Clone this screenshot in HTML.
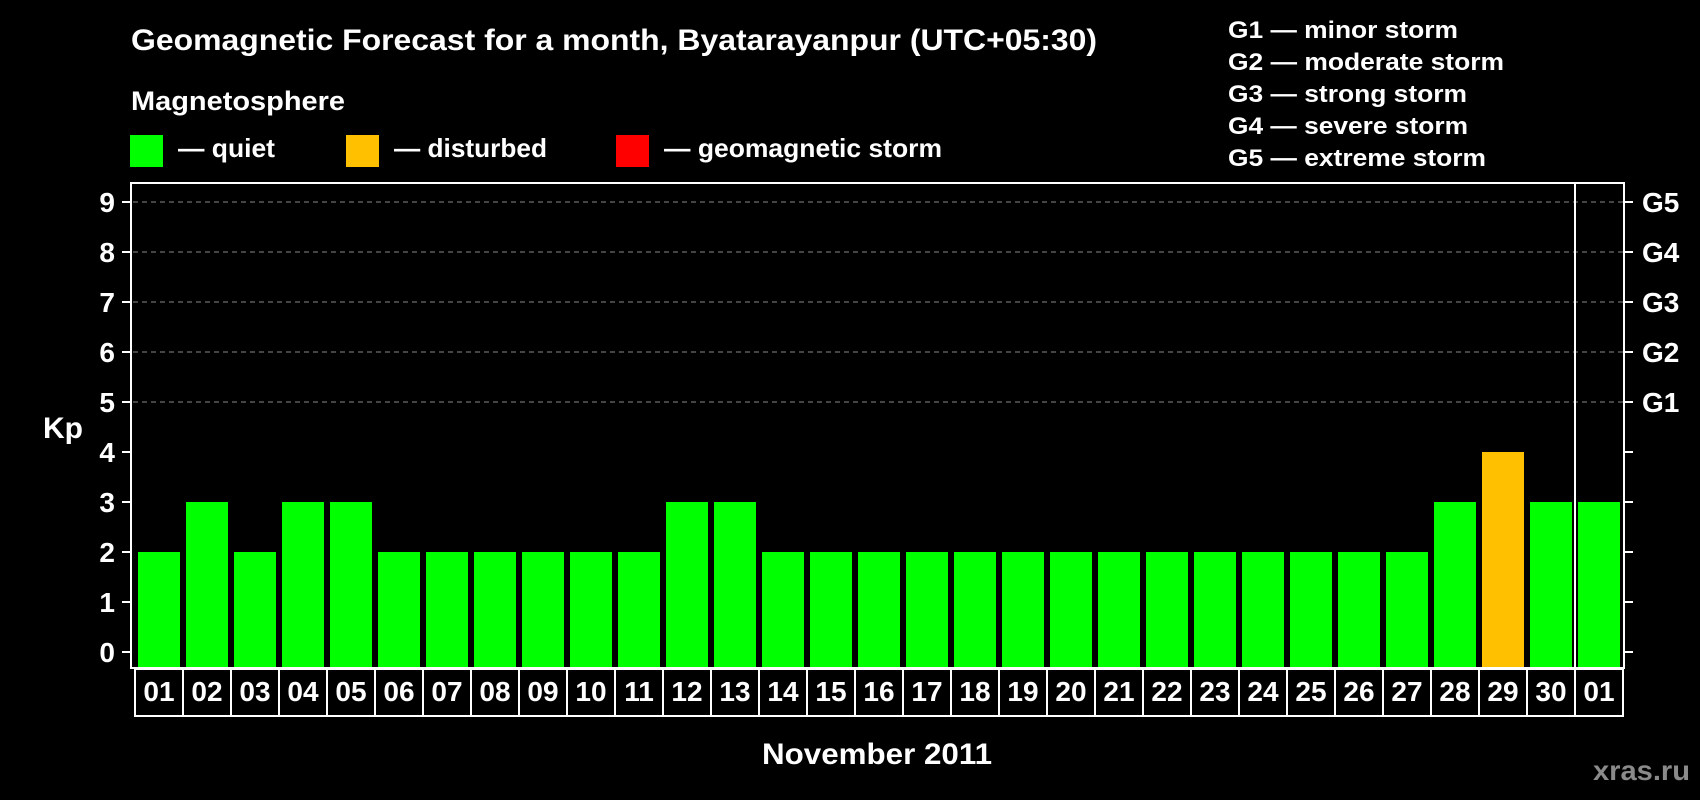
<!DOCTYPE html>
<html><head><meta charset="utf-8"><style>
html,body{margin:0;padding:0;background:#000;}
svg{display:block;}
text{font-family:"Liberation Sans",Arial,sans-serif;font-weight:bold;fill:#fff;}
</style></head><body>
<svg width="1700" height="800" viewBox="0 0 1700 800" xmlns="http://www.w3.org/2000/svg">
<rect width="1700" height="800" fill="#000"/>
<text x="131" y="50" font-size="30" textLength="966" lengthAdjust="spacingAndGlyphs">Geomagnetic Forecast for a month, Byatarayanpur (UTC+05:30)</text>
<text x="131" y="110" font-size="27" textLength="214" lengthAdjust="spacingAndGlyphs">Magnetosphere</text>
<rect x="130" y="135" width="33" height="32" fill="#00ff00"/>
<text x="178" y="157" font-size="26" textLength="97" lengthAdjust="spacingAndGlyphs">— quiet</text>
<rect x="346" y="135" width="33" height="32" fill="#ffc000"/>
<text x="394" y="157" font-size="26" textLength="153" lengthAdjust="spacingAndGlyphs">— disturbed</text>
<rect x="616" y="135" width="33" height="32" fill="#ff0000"/>
<text x="664" y="157" font-size="26" textLength="278" lengthAdjust="spacingAndGlyphs">— geomagnetic storm</text>
<g font-size="24">
<text x="1228" y="38" textLength="230" lengthAdjust="spacingAndGlyphs">G1 — minor storm</text>
<text x="1228" y="70" textLength="276" lengthAdjust="spacingAndGlyphs">G2 — moderate storm</text>
<text x="1228" y="102" textLength="239" lengthAdjust="spacingAndGlyphs">G3 — strong storm</text>
<text x="1228" y="134" textLength="240" lengthAdjust="spacingAndGlyphs">G4 — severe storm</text>
<text x="1228" y="166" textLength="258" lengthAdjust="spacingAndGlyphs">G5 — extreme storm</text>
</g>
<g stroke="#888" stroke-width="1" stroke-dasharray="5,4">
<line x1="133" y1="202" x2="1623" y2="202"/>
<line x1="133" y1="252" x2="1623" y2="252"/>
<line x1="133" y1="302" x2="1623" y2="302"/>
<line x1="133" y1="352" x2="1623" y2="352"/>
<line x1="133" y1="402" x2="1623" y2="402"/>
</g>
<g fill="#00ff00">
<rect x="138" y="552" width="42" height="116"/>
<rect x="186" y="502" width="42" height="166"/>
<rect x="234" y="552" width="42" height="116"/>
<rect x="282" y="502" width="42" height="166"/>
<rect x="330" y="502" width="42" height="166"/>
<rect x="378" y="552" width="42" height="116"/>
<rect x="426" y="552" width="42" height="116"/>
<rect x="474" y="552" width="42" height="116"/>
<rect x="522" y="552" width="42" height="116"/>
<rect x="570" y="552" width="42" height="116"/>
<rect x="618" y="552" width="42" height="116"/>
<rect x="666" y="502" width="42" height="166"/>
<rect x="714" y="502" width="42" height="166"/>
<rect x="762" y="552" width="42" height="116"/>
<rect x="810" y="552" width="42" height="116"/>
<rect x="858" y="552" width="42" height="116"/>
<rect x="906" y="552" width="42" height="116"/>
<rect x="954" y="552" width="42" height="116"/>
<rect x="1002" y="552" width="42" height="116"/>
<rect x="1050" y="552" width="42" height="116"/>
<rect x="1098" y="552" width="42" height="116"/>
<rect x="1146" y="552" width="42" height="116"/>
<rect x="1194" y="552" width="42" height="116"/>
<rect x="1242" y="552" width="42" height="116"/>
<rect x="1290" y="552" width="42" height="116"/>
<rect x="1338" y="552" width="42" height="116"/>
<rect x="1386" y="552" width="42" height="116"/>
<rect x="1434" y="502" width="42" height="166"/>
<rect x="1530" y="502" width="42" height="166"/>
<rect x="1578" y="502" width="42" height="166"/>
</g>
<rect x="1482" y="452" width="42" height="216" fill="#ffc000"/>
<g stroke="#fff" stroke-width="2" fill="none">
<rect x="131" y="183" width="1493" height="485"/>
<line x1="1575" y1="183" x2="1575" y2="668"/>
<rect x="135" y="669" width="1488" height="47"/>
</g>
<g stroke="#fff" stroke-width="2">
<line x1="122" y1="202" x2="131" y2="202"/><line x1="122" y1="252" x2="131" y2="252"/>
<line x1="122" y1="302" x2="131" y2="302"/><line x1="122" y1="352" x2="131" y2="352"/>
<line x1="122" y1="402" x2="131" y2="402"/><line x1="122" y1="452" x2="131" y2="452"/>
<line x1="122" y1="502" x2="131" y2="502"/><line x1="122" y1="552" x2="131" y2="552"/>
<line x1="122" y1="602" x2="131" y2="602"/><line x1="122" y1="652" x2="131" y2="652"/>
<line x1="1624" y1="202" x2="1633" y2="202"/><line x1="1624" y1="252" x2="1633" y2="252"/>
<line x1="1624" y1="302" x2="1633" y2="302"/><line x1="1624" y1="352" x2="1633" y2="352"/>
<line x1="1624" y1="402" x2="1633" y2="402"/><line x1="1624" y1="452" x2="1633" y2="452"/>
<line x1="1624" y1="502" x2="1633" y2="502"/><line x1="1624" y1="552" x2="1633" y2="552"/>
<line x1="1624" y1="602" x2="1633" y2="602"/><line x1="1624" y1="652" x2="1633" y2="652"/>
</g>
<g stroke="#fff" stroke-width="2">
<line x1="183" y1="669" x2="183" y2="716"/><line x1="231" y1="669" x2="231" y2="716"/>
<line x1="279" y1="669" x2="279" y2="716"/><line x1="327" y1="669" x2="327" y2="716"/>
<line x1="375" y1="669" x2="375" y2="716"/><line x1="423" y1="669" x2="423" y2="716"/>
<line x1="471" y1="669" x2="471" y2="716"/><line x1="519" y1="669" x2="519" y2="716"/>
<line x1="567" y1="669" x2="567" y2="716"/><line x1="615" y1="669" x2="615" y2="716"/>
<line x1="663" y1="669" x2="663" y2="716"/><line x1="711" y1="669" x2="711" y2="716"/>
<line x1="759" y1="669" x2="759" y2="716"/><line x1="807" y1="669" x2="807" y2="716"/>
<line x1="855" y1="669" x2="855" y2="716"/><line x1="903" y1="669" x2="903" y2="716"/>
<line x1="951" y1="669" x2="951" y2="716"/><line x1="999" y1="669" x2="999" y2="716"/>
<line x1="1047" y1="669" x2="1047" y2="716"/><line x1="1095" y1="669" x2="1095" y2="716"/>
<line x1="1143" y1="669" x2="1143" y2="716"/><line x1="1191" y1="669" x2="1191" y2="716"/>
<line x1="1239" y1="669" x2="1239" y2="716"/><line x1="1287" y1="669" x2="1287" y2="716"/>
<line x1="1335" y1="669" x2="1335" y2="716"/><line x1="1383" y1="669" x2="1383" y2="716"/>
<line x1="1431" y1="669" x2="1431" y2="716"/><line x1="1479" y1="669" x2="1479" y2="716"/>
<line x1="1527" y1="669" x2="1527" y2="716"/><line x1="1575" y1="669" x2="1575" y2="716"/>
</g>
<g font-size="28" text-anchor="end">
<text x="115" y="212">9</text><text x="115" y="262">8</text><text x="115" y="312">7</text>
<text x="115" y="362">6</text><text x="115" y="412">5</text><text x="115" y="462">4</text>
<text x="115" y="512">3</text><text x="115" y="562">2</text><text x="115" y="612">1</text>
<text x="115" y="662">0</text>
</g>
<text x="43" y="438" font-size="30">Kp</text>
<g font-size="28">
<text x="1642" y="212">G5</text><text x="1642" y="262">G4</text><text x="1642" y="312">G3</text>
<text x="1642" y="362">G2</text><text x="1642" y="412">G1</text>
</g>
<g font-size="28" text-anchor="middle">
<text x="159" y="701">01</text><text x="207" y="701">02</text><text x="255" y="701">03</text>
<text x="303" y="701">04</text><text x="351" y="701">05</text><text x="399" y="701">06</text>
<text x="447" y="701">07</text><text x="495" y="701">08</text><text x="543" y="701">09</text>
<text x="591" y="701">10</text><text x="639" y="701">11</text><text x="687" y="701">12</text>
<text x="735" y="701">13</text><text x="783" y="701">14</text><text x="831" y="701">15</text>
<text x="879" y="701">16</text><text x="927" y="701">17</text><text x="975" y="701">18</text>
<text x="1023" y="701">19</text><text x="1071" y="701">20</text><text x="1119" y="701">21</text>
<text x="1167" y="701">22</text><text x="1215" y="701">23</text><text x="1263" y="701">24</text>
<text x="1311" y="701">25</text><text x="1359" y="701">26</text><text x="1407" y="701">27</text>
<text x="1455" y="701">28</text><text x="1503" y="701">29</text><text x="1551" y="701">30</text>
<text x="1599" y="701">01</text>
</g>
<text x="762" y="764" font-size="30" textLength="230" lengthAdjust="spacingAndGlyphs">November 2011</text>
<text x="1593" y="780" font-size="28" style="fill:#8a8a8a" textLength="97" lengthAdjust="spacingAndGlyphs">xras.ru</text>
</svg>
</body></html>
